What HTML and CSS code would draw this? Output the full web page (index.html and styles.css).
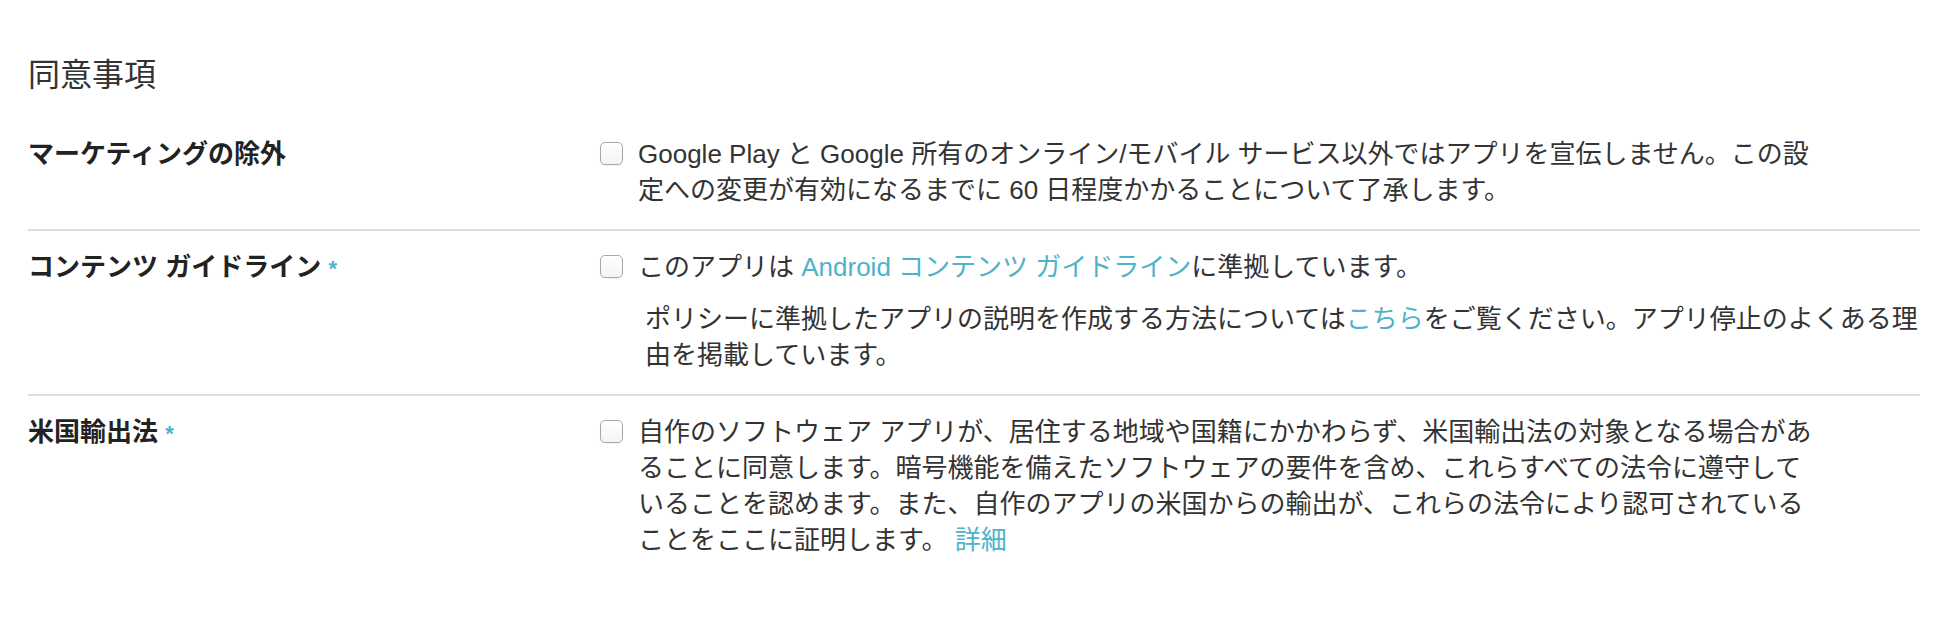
FILE: index.html
```html
<!DOCTYPE html>
<html lang="ja">
<head>
<meta charset="utf-8">
<title>同意事項</title>
<link rel="stylesheet" href="styles.css">
</head>
<body>
<div class="page">
  <h2 class="title">同意事項</h2>

  <div class="row">
    <div class="label">マーケティングの除外</div>
    <div class="field">
      <label class="check">
        <span class="box"></span>
        <span class="text">Google Play と Google 所有のオンライン/モバイル サービス以外ではアプリを宣伝しません。この設定への変更が有効になるまでに 60 日程度かかることについて了承します。</span>
      </label>
    </div>
  </div>

  <div class="row">
    <div class="label">コンテンツ ガイドライン <span class="req">*</span></div>
    <div class="field">
      <label class="check">
        <span class="box"></span>
        <span class="text">このアプリは <a class="link" href="#">Android コンテンツ ガイドライン</a>に準拠しています。</span>
      </label>
      <p class="note">ポリシーに準拠したアプリの説明を作成する方法については<a class="link" href="#">こちら</a>をご覧ください。アプリ停止のよくある理由を掲載しています。</p>
    </div>
  </div>

  <div class="row last">
    <div class="label">米国輸出法 <span class="req">*</span></div>
    <div class="field">
      <label class="check">
        <span class="box"></span>
        <span class="text">自作のソフトウェア アプリが、居住する地域や国籍にかかわらず、米国輸出法の対象となる場合があることに同意します。暗号機能を備えたソフトウェアの要件を含め、これらすべての法令に遵守していることを認めます。また、自作のアプリの米国からの輸出が、これらの法令により認可されていることをここに証明します。 <a class="link" href="#">詳細</a></span>
      </label>
    </div>
  </div>
</div>
</body>
</html>
```

FILE: styles.css
```css
html, body {
  margin: 0;
  padding: 0;
  background: #ffffff;
}

body {
  font-family: "Liberation Sans", "Noto Sans CJK JP", sans-serif;
  color: #333333;
}

.page {
  width: 1892px;
  padding-left: 28px;
}

.title {
  margin: 56px 0 24px 0;
  font-size: 32px;
  line-height: 38px;
  font-weight: 400;
  color: #333333;
}

.row {
  display: flex;
  align-items: flex-start;
  padding: 18px 0 21px 0;
  border-bottom: 2px solid #dedede;
}

.row.last {
  border-bottom: none;
}

.label {
  width: 572px;
  flex: none;
  font-size: 26px;
  line-height: 36px;
  font-weight: 700;
  color: #222222;
}

.req {
  color: #4db3c8;
  font-size: 22px;
}

.field {
  flex: 1;
  font-size: 26px;
  line-height: 36px;
}

.check {
  display: flex;
  align-items: flex-start;
  gap: 15px;
}

.box {
  flex: none;
  width: 23px;
  height: 23px;
  margin-top: 6px;
  box-sizing: border-box;
  border: 1.5px solid #a8a8a8;
  border-radius: 5px;
  background: linear-gradient(#ffffff, #f4f4f4);
  box-shadow: 0 1px 1px rgba(0, 0, 0, 0.06);
}

.text {
  width: 1185px;
}

.link {
  color: #4db3c8;
  text-decoration: none;
}

.note {
  margin: 16px -14px 0 45px;
}
```
